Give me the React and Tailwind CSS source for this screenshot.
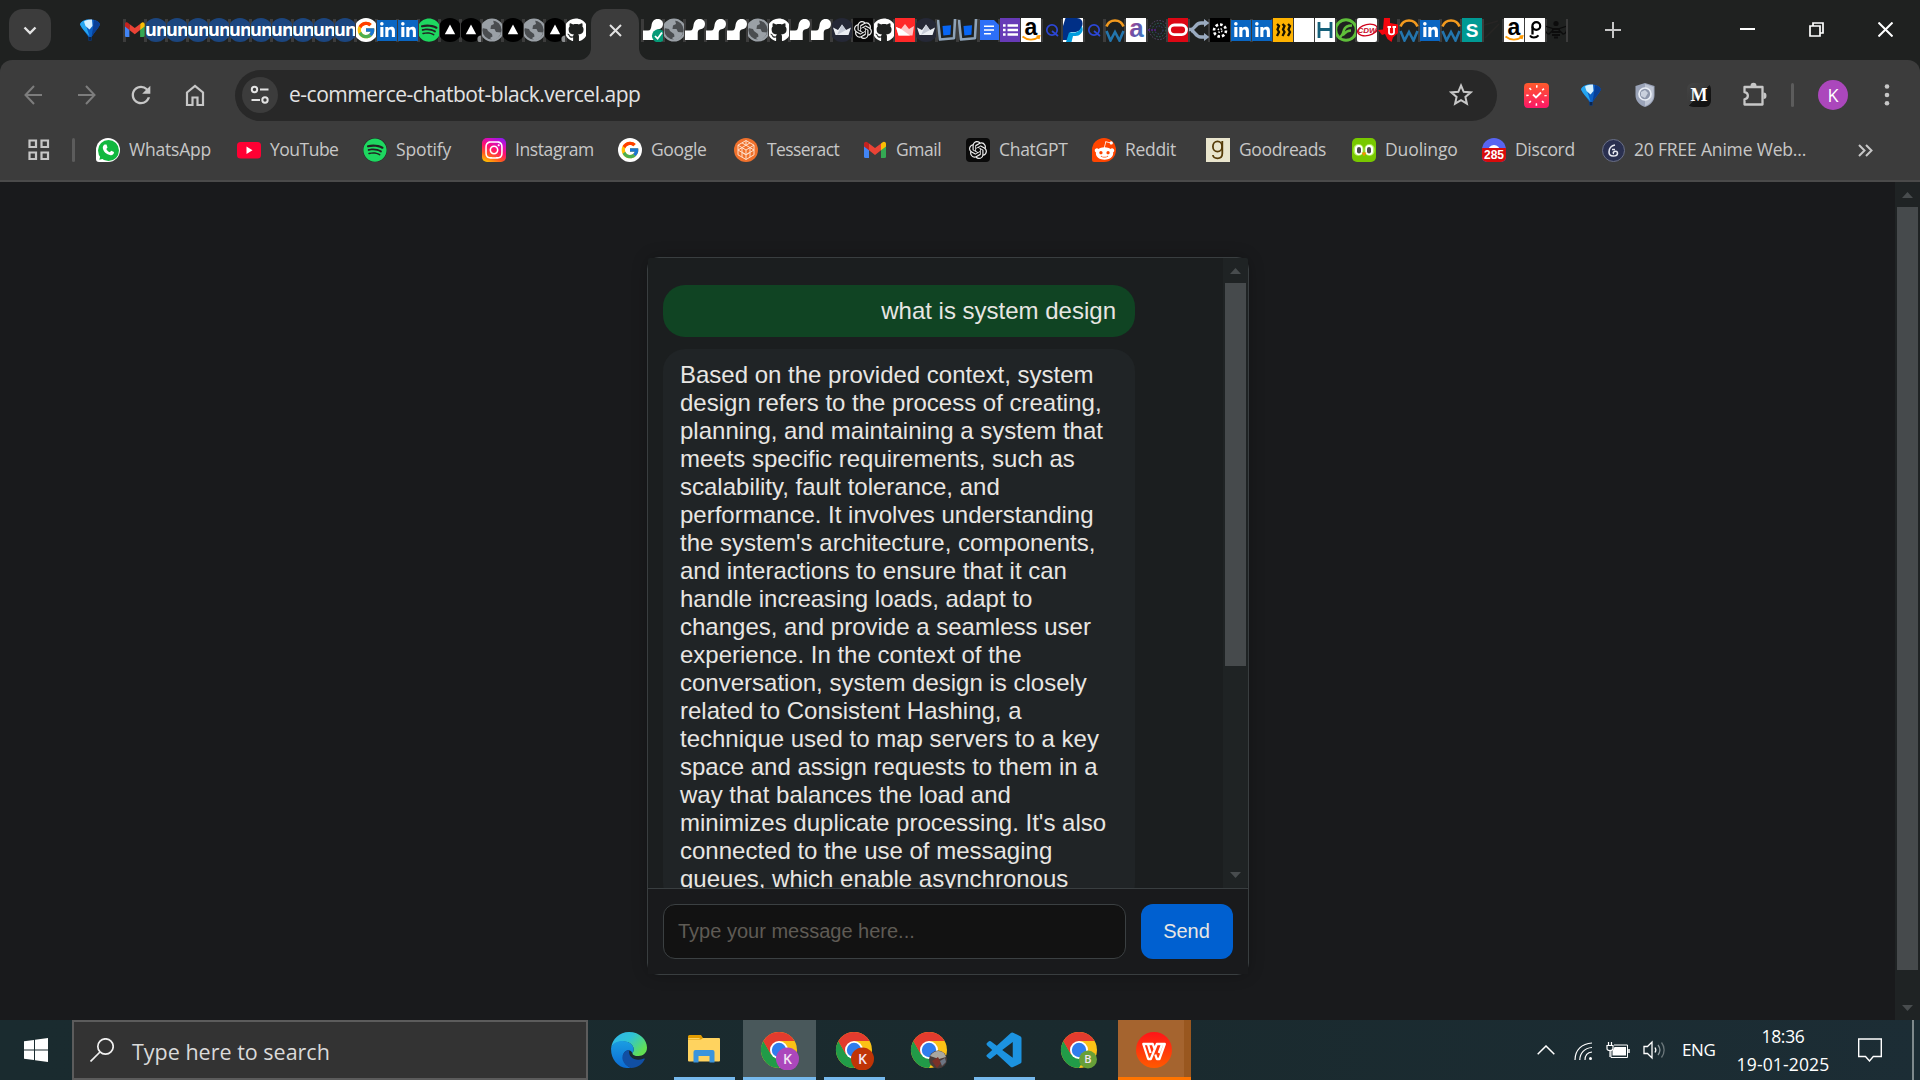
import React from "react";
import { FaGithub, FaWhatsapp, FaSpotify, FaLinkedinIn, FaRedditAlien, FaInstagram } from "react-icons/fa";
import { SiOpenai } from "react-icons/si";
import { FcGoogle } from "react-icons/fc";
import { MdRefresh } from "react-icons/md";
import { BiLogoVisualStudio } from "react-icons/bi";

const UI = "font-['Open_Sans','Noto_Sans',sans-serif]";

function Svg({ size = 24, children, className = "" }) {
  return (
    <svg viewBox="0 0 24 24" width={size} height={size} className={`block shrink-0 overflow-visible ${className}`} fill="none">
      {children}
    </svg>
  );
}

/* ---------- favicons ---------- */
const Gmail = ({ size = 24 }) => (
  <Svg size={size}>
    <path d="M1 5v13.500a1.500 1.500 0 0 0 1.500 1.500H6V9.500L1 5z" fill="#4285f4" />
    <path d="M23 5v13.500a1.500 1.500 0 0 1-1.500 1.500H18V9.500L23 5z" fill="#34a853" />
    <path d="M18 5.500v6.800l5-3.900V6c0-2.300-2.300-2.900-3.700-1.600L18 5.500z" fill="#fbbc04" />
    <path d="M6 12.300V5.500l6 4.500 6-4.500v6.800l-6 4.600-6-4.600z" fill="#ea4335" />
    <path d="M1 6v2.400l5 3.900V5.500L4.700 4.400C3.300 3.100 1 3.700 1 6z" fill="#c5221f" />
  </Svg>
);
const GmailTab = () => <Gmail size={21.5} />;
const Un = () => (
  <span className="flex size-6 shrink-0 items-center justify-center rounded-full bg-[#1c467f]">
    <span className="-mt-[3px] font-['Open_Sans',sans-serif] text-[18px] leading-none font-bold tracking-[-0.8px] text-white">un</span>
  </span>
);
const Google = () => (
  <span className="flex size-6 shrink-0 items-center justify-center rounded-full bg-white">
    <FcGoogle size={20} />
  </span>
);
const LinkedIn = () => (
  <span className="flex h-[21px] w-6 shrink-0 items-center justify-center bg-[#0a66c2]">
    <FaLinkedinIn size={17} className="text-white" />
  </span>
);
const Spotify = () => (
  <span className="relative flex size-6 shrink-0 items-center justify-center rounded-full bg-[#222]">
    <FaSpotify size={24} className="text-[#1ed760]" />
  </span>
);
const Vercel = () => (
  <Svg>
    <circle cx="12" cy="12" r="12" fill="#000" />
    <path d="M12 6.500l5.200 9.700H6.800z" fill="#fff" />
  </Svg>
);
const VercelBusy = () => (
  <Svg>
    <circle cx="12" cy="12" r="12" fill="#000" />
    <path d="M12 6.500l5.200 9.700H6.800z" fill="#fff" />
    <circle cx="22" cy="21" r="3.600" fill="#8a8c8e" />
  </Svg>
);
const Globe = () => (
  <Svg>
    <circle cx="12" cy="12" r="10.600" fill="#4a4d50" stroke="#9aa0a6" strokeWidth="2" />
    <path d="M2 10c.5-4 4-8.500 11-8l1 4-3 1.500-.5 3.500h4l1.500 3 5 .5c-1.500 5-5 7.500-9 7.500L10 20l2.500-1.500L12 16l-4-3-1-2z" fill="#9aa0a6" />
  </Svg>
);
const Github = () => <FaGithub size={24} className="block shrink-0 text-white" />;
const Joint = () => (
  <Svg>
    <path d="M2 12.500h5c2.500 0 3-2 3.500-5C11 3.500 13 1 16.500 1 20 1 22 3 22 6s-2 5-4.500 5.200c-2.500.3-2.800 2-2.800 4.300V22H2z" fill="#fff" />
  </Svg>
);
const JointOk = () => (
  <Svg>
    <path d="M2 12.500h5c2.500 0 3-2 3.500-5C11 3.500 13 1 16.500 1 20 1 22 3 22 6s-2 5-4.500 5.200c-2.500.3-2.800 2-2.800 4.300V22H2z" fill="#fff" />
    <circle cx="17.500" cy="17.800" r="6.600" fill="#069b78" />
    <path d="M14 18l2.600 2.700L21 14.500" stroke="#fff" strokeWidth="1.800" />
  </Svg>
);
const Crown = () => (
  <Svg>
    <circle cx="12" cy="12" r="12" fill="#252836" />
    <path d="M3 9.500l5 2.500 4-5.500 4 5.500 5-2.500-2.500 7.500h-13z" fill="#eceff4" />
    <path d="M12 6.500l4 5.500-9 5z" fill="#c5cad6" />
  </Svg>
);
const CrownRed = () => (
  <Svg>
    <path d="M1 0h22v24H1z" fill="#ff2828" />
    <path d="M3 9l5 2 4-5 4 5 5-3-1.500 9.500H5.500z" fill="#ffc4c4" />
    <path d="M3 9l5 2 9 6.500H5.500z" fill="#fff" />
  </Svg>
);
const Gpt = () => (
  <span className="flex size-6 shrink-0 items-center justify-center rounded-[4px] bg-[#0a0a0a]">
    <SiOpenai size={18} className="text-[#eee]" />
  </span>
);
const Glass = () => (
  <Svg>
    <path d="M3 2l2 19.500 14-1.200L20 1" stroke="#8fa3b8" strokeWidth="2.600" strokeLinejoin="round" />
    <path d="M7.500 8l8.500-.7-.6 9.500-7 .8z" fill="#0866f5" />
  </Svg>
);
const Doc = () => (
  <Svg>
    <path d="M3 2h14l5 5v15H3z" fill="#2d6ff7" />
    <path d="M7 8.300h10M7 12h10M7 15.700h7" stroke="#fff" strokeWidth="1.600" />
  </Svg>
);
const Form = () => (
  <Svg>
    <path d="M2 0h20v24H2z" fill="#673ab7" />
    <path d="M5 7.500h2.600M5 12h2.600M5 16.500h2.600M9.500 7.500H20M9.500 12H20M9.500 16.500H20" stroke="#fff" strokeWidth="2.600" />
  </Svg>
);
const Amazon = () => (
  <Svg>
    <path d="M2 0h20v24H2z" fill="#fff" />
    <text x="12" y="17" textAnchor="middle" fontFamily="Liberation Sans" fontWeight="bold" fontSize="23" fill="#000">a</text>
    <path d="M3.500 18.500c5 4 11.500 4 16.500.5M17.500 18.300l3-.2-.8 2.800" stroke="#f90" strokeWidth="1.800" />
  </Svg>
);
const Quora = () => (
  <Svg>
    <circle cx="12" cy="12" r="5.200" stroke="#2c47d6" strokeWidth="1.700" />
    <path d="M12 13l6 5" stroke="#2c47d6" strokeWidth="1.700" />
  </Svg>
);
const Paypal = () => (
  <Svg>
    <path d="M2 0h20v24H2z" fill="#fff" />
    <path d="M4.500 0H16c5 .5 6.500 4 5 8.500-1.300 4-4 5.500-8 5.500H9.500L7.500 22H2V8z" fill="#002f86" />
    <path d="M20.500 8c3 3.500 0 10-6 10h-2.500L10.500 24H5l3-9.500h5c4 0 6.500-2.500 7.500-6.500z" fill="#009cde" />
  </Svg>
);
const ArcW = () => (
  <Svg>
    <path d="M3.500 8.500c3-8 14-8 17 0" stroke="#f39a1e" strokeWidth="2.600" />
    <path d="M3.500 13l4 9.500L12 14l4.500 8.500 4-9.500" stroke="#2375ad" strokeWidth="2.600" />
  </Svg>
);
const LetterA = () => (
  <Svg>
    <defs>
      <linearGradient id="aGrad" x1="0" y1="0" x2="1" y2="1">
        <stop offset="0" stopColor="#e0457b" />
        <stop offset=".5" stopColor="#6b4fa8" />
        <stop offset="1" stopColor="#2a8fd0" />
      </linearGradient>
    </defs>
    <path d="M2 0h20v24H2z" fill="#fff" />
    <text x="12.500" y="19" textAnchor="middle" fontFamily="Liberation Sans" fontWeight="bold" fontSize="26" fill="url(#aGrad)">a</text>
  </Svg>
);
const Rings = () => (
  <Svg>
    <circle cx="14" cy="12" r="9.500" stroke="#5a4a72" strokeWidth="1" strokeDasharray="1.500 1.500" />
    <circle cx="14" cy="12" r="6.800" stroke="#2f6b62" strokeWidth="1" strokeDasharray="1.500 1.500" />
    <circle cx="14" cy="12" r="4" stroke="#3b4a80" strokeWidth="1" strokeDasharray="1.500 1.500" />
    <path d="M3 12h9" stroke="#4b1f73" strokeWidth="2" strokeDasharray="2 1" />
  </Svg>
);
const Oracle = () => (
  <Svg>
    <path d="M1 0h22v24H1z" fill="#dc0714" />
    <rect x="3.500" y="7" width="17" height="9.600" rx="4.800" stroke="#fff" strokeWidth="2.800" />
  </Svg>
);
const Fork = () => (
  <Svg>
    <path d="M2 11.500h2c4 0 4-6.500 10-6.500h5M4 12.500c4 0 4 6.500 10 6.500h5" stroke="#9aabc0" strokeWidth="3.400" />
    <path d="M17 1l5.500 4L17 9zM17 15l5.500 4-5.500 4z" fill="#9aabc0" />
  </Svg>
);
const Dots = () => (
  <Svg>
    <path d="M2 0h20v24H2z" fill="#000" />
    <circle cx="12" cy="12.500" r="6" stroke="#fff" strokeWidth="2.600" strokeDasharray="2.600 2" />
    <circle cx="12" cy="12.500" r="2" stroke="#fff" strokeWidth="1.400" strokeDasharray="1.500 1.500" />
  </Svg>
);
const Waves = () => (
  <Svg>
    <path d="M2 0h20v24H2z" fill="#ffb300" />
    <path d="M6 6l2 2-1.500 3.500L8 14l-2 4M11.500 6l2 2-1.500 3.500 1.500 2.500-2 4M17 6l2 2-1.500 3.500L19 14l-2 4" stroke="#1a1400" strokeWidth="2.300" />
  </Svg>
);
const Blank = () => <span className="h-6 w-5 shrink-0 bg-white" />;
const LetterH = () => (
  <Svg>
    <path d="M2 0h20v24H2z" fill="#fff" />
    <path d="M6 4v16M18 4v16M6 11.500h12" stroke="#15607a" strokeWidth="2.800" />
  </Svg>
);
const GreenF = () => (
  <Svg>
    <circle cx="12" cy="12" r="10.300" stroke="#5fbf3a" strokeWidth="3" />
    <path d="M4 20c4-1 5-4 6-8 1-3 3-4.500 8-4.500M9 17c1.500-.5 2-4.500 8-4.500" stroke="#5fbf3a" strokeWidth="2.600" />
  </Svg>
);
const Cdw = () => (
  <Svg>
    <rect x="2" width="20" height="24" rx="2" fill="#fff" />
    <ellipse cx="12.500" cy="12" rx="10" ry="5.500" transform="rotate(-12 12.500 12)" stroke="#d0021b" strokeWidth="1.300" />
    <text x="12" y="15" textAnchor="middle" fontFamily="Liberation Sans" fontStyle="italic" fontWeight="bold" fontSize="8" fill="#c8102e">CDW</text>
  </Svg>
);
const Texas = () => (
  <Svg>
    <path d="M8 0h6v5l8 1.500v8.500l-5 4.500-1.500 4.500-4-3-2.500-5-3 1-4-5 5-.5z" fill="#f5060d" />
    <path d="M13 9v5.500c0 2.500 5 2.500 5 0V9M11.500 9H15M16.500 9H20" stroke="#fff" strokeWidth="1.800" />
  </Svg>
);
const LetterS = () => (
  <Svg>
    <path d="M2 0h21v24H2z" fill="#009a94" />
    <text x="12" y="18.500" textAnchor="middle" fontFamily="Liberation Sans" fontWeight="bold" fontSize="19" fill="#fff">S</text>
  </Svg>
);
const Faint = () => (
  <Svg>
    <path d="M3 7l14-4M4 20L18 6" stroke="#272524" strokeWidth="1.500" />
  </Svg>
);
const LetterP = () => (
  <Svg>
    <path d="M2 0h20v24H2z" fill="#fff" />
    <path d="M9.500 16.500V8.500" stroke="#000" strokeWidth="2.300" />
    <circle cx="13.300" cy="8" r="3.900" stroke="#000" strokeWidth="2.200" />
    <path d="M7 17.500c1.500 2.700 6 2.700 8.500-.2" stroke="#000" strokeWidth="2" />
  </Svg>
);
const Bee = () => (
  <Svg>
    <circle cx="12" cy="5.500" r="2.600" fill="#0c0c0c" />
    <path d="M1 8l9 3-5 5c-3 0-4-4-4-8zM23 8l-9 3 5 5c3 0 4-4 4-8z" stroke="#0c0c0c" strokeWidth="1.300" />
    <path d="M8 11h8M7.500 14h9M8 17h8M10 19.500h4" stroke="#0c0c0c" strokeWidth="2" />
  </Svg>
);

const leftTabs = [
  GmailTab, Un, Un, Un, Un, Un, Un, Un, Un, Un, Un, Google, LinkedIn, LinkedIn, Spotify,
  Vercel, VercelBusy, Globe, Vercel, Globe, VercelBusy, Github,
];
const rightTabs = [
  JointOk, Globe, Joint, Joint, Joint, Globe, Github, Joint, Joint, Crown, Gpt, Github, CrownRed, Crown,
  Glass, Glass, Doc, Form, Amazon, Quora, Paypal, Quora, ArcW, LetterA, Rings, Oracle, Fork, Dots,
  LinkedIn, LinkedIn, Waves, Blank, LetterH, GreenF, Cdw, Texas, ArcW, LinkedIn, ArcW, LetterS, Faint,
  Amazon, LetterP, Bee,
];

function TabRow({ icons }) {
  return (
    <div className="flex h-6 items-center">
      {icons.map((Icon, i) => (
        <div key={i} className="flex h-6 w-[21px] shrink-0 items-center">
          <span className="mt-px h-[23px] w-[3px] shrink-0 bg-[#3c3c3c]" />
          <span className="relative -ml-px flex h-6 w-5 shrink-0 items-center justify-center overflow-hidden">
            <Icon />
          </span>
        </div>
      ))}
    </div>
  );
}

const Balloon = () => (
  <svg viewBox="0 0 22 24" width="22" height="24" className="block shrink-0">
    <path d="M1 6.500C2 3 6 1.500 11 1.500s9 1.500 10 5C19.500 10 15.500 14 12.500 19v3.500h-3V19C6.500 14 2.500 10 1 6.500z" fill="#0b5fc4" />
    <path d="M1 6.500C2 3 6 1.500 10 1.500L7 7.500l3.500 11C6.500 14 2.500 10 1 6.500z" fill="#25a5ef" />
    <path d="M5 3.500c2-1.500 5-2 8-2L13.500 8l-3 3.500L6.500 8z" fill="#d4f0ff" />
    <path d="M15 2c3 .7 5.300 2 6 4.500-1.500 3.500-5.500 7.500-8.500 12.500l1.500-9z" fill="#083f96" />
    <path d="M9.500 19h3v3.500h-3z" fill="#0a2550" />
  </svg>
);

function TabStrip() {
  return (
    <div className="flex h-[60px] shrink-0 items-start bg-[#1f2120]">
      <button className="mt-[9px] ml-[9px] flex size-[42px] shrink-0 items-center justify-center rounded-[14px] bg-[#3c3c3c]">
        <svg width="14" height="9" viewBox="0 0 14 9" fill="none"><path d="M1.500 1.500L7 7l5.500-5.500" stroke="#e3e3e3" strokeWidth="2.400" /></svg>
      </button>
      <div className="mt-[18px] ml-[28px] w-[44px] shrink-0"><Balloon /></div>
      <div className="mt-[18px] w-[456px] shrink-0"><TabRow icons={leftTabs} /></div>
      <div className="flex h-[60px] w-[72px] shrink-0 items-end">
        <svg width="12" height="12" viewBox="0 0 12 12" className="block shrink-0"><path d="M0 12A12 12 0 0 0 12 0V12z" fill="#3c3c3c" /></svg>
        <div className="flex h-[51px] w-12 shrink-0 items-start justify-center rounded-t-[14px] bg-[#3c3c3c] pt-[15px]">
          <svg width="13" height="13" viewBox="0 0 13 13"><path d="M1 1l11 11M12 1L1 12" stroke="#e3e3e3" strokeWidth="2" /></svg>
        </div>
        <svg width="12" height="12" viewBox="0 0 12 12" className="block shrink-0"><path d="M12 12A12 12 0 0 1 0 0V12z" fill="#3c3c3c" /></svg>
      </div>
      <div className="mt-[18px] -ml-[10px] w-[925px] shrink-0"><TabRow icons={rightTabs} /></div>
      <span className="mt-[19px] h-[23px] w-[2px] shrink-0 bg-[#3c3c3c]" />
      <svg width="16" height="16" viewBox="0 0 16 16" className="mt-[22px] ml-[37px] shrink-0"><path d="M8 0v16M0 8h16" stroke="#c7c7c7" strokeWidth="2" /></svg>
      <div className="mt-[22px] mr-[27px] ml-auto flex shrink-0 items-center gap-[54px]">
        <svg width="15" height="15" viewBox="0 0 15 15"><path d="M0 7h15" stroke="#fff" strokeWidth="2" /></svg>
        <svg width="15" height="15" viewBox="0 0 15 15" fill="none"><path d="M1 4h10v10H1zM4 4V1h10v10h-3" stroke="#fff" strokeWidth="1.700" /></svg>
        <svg width="15" height="15" viewBox="0 0 15 15"><path d="M.5.5l14 14M14.500.5l-14 14" stroke="#fff" strokeWidth="2" /></svg>
      </div>
    </div>
  );
}

function Toolbar() {
  return (
    <div className="flex h-[70px] shrink-0 items-center rounded-t-[12px] bg-[#3c3c3c]">
      <svg width="18" height="22" viewBox="0 0 18 22" fill="none" className="ml-6"><path d="M18 11H2M10 2l-8.500 9L10 20" stroke="#7d7d7d" strokeWidth="2" /></svg>
      <svg width="18" height="22" viewBox="0 0 18 22" fill="none" className="ml-[36px]"><path d="M0 11h16M8 2l8.500 9L8 20" stroke="#7d7d7d" strokeWidth="2" /></svg>
      <MdRefresh size={28} className="ml-[31px] text-[#c7c7c7]" />
      <svg width="20" height="22" viewBox="0 0 20 22" fill="none" className="ml-[30px]"><path d="M2 8.500L10 2l8 6.500V21h-5.500v-7.500h-5V21H2z" stroke="#c7c7c7" strokeWidth="2.200" /></svg>
      <div className="ml-[30px] flex h-[51px] w-[1262px] shrink-0 items-center rounded-full bg-[#282828] pl-[7px]">
        <span className="flex size-9 shrink-0 items-center justify-center rounded-full bg-[#3c3c3c]">
          <svg width="20" height="20" viewBox="0 0 20 20" fill="none" stroke="#e3e3e3" strokeWidth="2">
            <circle cx="4.500" cy="4.500" r="2.700" /><path d="M10 4.500h8.500M1.500 15H10" /><circle cx="15" cy="15" r="2.700" />
          </svg>
        </span>
        <span className={`${UI} ml-[11px] text-[21px] tracking-[-0.48px] text-[#e3e3e3]`}>e-commerce-chatbot-black.vercel.app</span>
        <svg width="24" height="24" viewBox="0 0 24 24" fill="none" className="mr-6 ml-auto"><path d="M12 2.500l2.700 6.300 6.900.6-5.200 4.500 1.500 6.800-5.900-3.600-5.900 3.600 1.500-6.800-5.200-4.500 6.900-.6z" stroke="#c7c7c7" strokeWidth="2" /></svg>
      </div>
      <svg width="25" height="25" viewBox="0 0 25 25" fill="none" className="ml-[27px]">
        <defs><linearGradient id="clk" x1="0" y1="0" x2="0" y2="1"><stop offset="0" stopColor="#ff5a2b" /><stop offset="1" stopColor="#fb1768" /></linearGradient></defs>
        <rect width="25" height="25" rx="4" fill="url(#clk)" />
        <circle cx="12.500" cy="12.500" r="9" stroke="#fff" strokeWidth="2.400" strokeDasharray="1.600 5.470" strokeDashoffset=".8" />
        <path d="M9 11.500l3 3 5-5" stroke="#fff" strokeWidth="1.800" />
      </svg>
      <div className="ml-[31px]"><Balloon /></div>
      <svg width="20" height="24" viewBox="0 0 20 24" fill="none" className="ml-[33px]">
        <path d="M10 0l9.500 3v9c0 6-4 10-9.500 12C4.500 22 .5 18 .5 12V3z" fill="#9aa3b8" />
        <path d="M10 1l8.500 3v8c0 5.500-3.500 9-8.500 11z" fill="#bcc3d2" />
        <circle cx="10" cy="11" r="6" fill="#8d96ab" stroke="#e9edf5" strokeWidth="1.700" /><path d="M6 9l4-2 3 3-3 5-4-2z" fill="#c9d0dd" />
      </svg>
      <span className="ml-[32px] flex size-6 items-center justify-center rounded-[6px] bg-[linear-gradient(135deg,#444_0%,#3a3a3a_50%,#171717_52%,#111_100%)] font-['Liberation_Serif',serif] text-[18px] leading-none font-bold text-white">M</span>
      <svg width="26" height="26" viewBox="0 0 26 26" fill="none" className="ml-[31px]">
        <path d="M2.500 5h18v17.500h-18v-5.200c4.500-.8 4.500-6.300 0-7.100z" stroke="#c7c7c7" strokeWidth="2.300" strokeLinejoin="round" />
        <path d="M8.500 4a3 3.200 0 0 1 6 0zM21.500 10.500a3 3.200 0 0 1 0 6.400z" fill="#c7c7c7" />
      </svg>
      <span className="ml-[23px] h-6 w-[3px] rounded-full bg-[#5c5c5c]" />
      <span className={`${UI} ml-6 flex size-[30px] items-center justify-center rounded-full bg-[#ab47bc] text-[18px] text-white`}>K</span>
      <svg width="6" height="24" viewBox="0 0 6 24" className="ml-9"><g fill="#c7c7c7"><circle cx="3" cy="3.500" r="2.300" /><circle cx="3" cy="12" r="2.300" /><circle cx="3" cy="20.300" r="2.300" /></g></svg>
    </div>
  );
}

/* ---------- bookmarks ---------- */
const Whatsapp = () => (
  <span className="relative flex size-6 items-center justify-center rounded-[12px_12px_12px_3px] bg-white">
    <span className="flex size-[21px] items-center justify-center rounded-full bg-[#12b83f]">
      <FaWhatsapp size={21} className="text-[#12b83f]" />
    </span>
    <svg viewBox="0 0 24 24" width="24" height="24" className="absolute inset-0"><path d="M8.500 6.500l2 0 1 3-1.200 1.400c.8 1.600 1.900 2.600 3.500 3.300l1.400-1.400 2.800 1.300c0 2.300-1.600 3.300-3.400 3.100-4.200-.6-7.300-3.600-7.800-7.200-.1-1.500.6-2.800 1.700-3.500z" fill="#fff" /></svg>
  </span>
);
const Youtube = () => (
  <Svg><rect y="4" width="24" height="16.500" rx="3.500" fill="#ff0033" /><path d="M9.500 8.500l6 3.700-6 3.700z" fill="#fff" /></Svg>
);
const Insta = () => (
  <span className="flex size-6 items-center justify-center rounded-[5px] bg-[linear-gradient(25deg,#ffc400_5%,#ff5a1f_28%,#ff0f6f_52%,#d40fc0_75%,#7a1cff_100%)]">
    <FaInstagram size={20} className="text-white" />
  </span>
);
const Tesseract = () => (
  <Svg>
    <circle cx="12" cy="12" r="12" fill="#f0712c" />
    <g stroke="#ffe0ca" strokeWidth="1">
      <path d="M12 2.500l8 4.700v9.600l-8 4.700-8-4.700V7.200z" />
      <path d="M4 7.200L12 12l8-4.800M12 12v9.500M12 2.500V7M8 4.900l8 4.700v9.500M16 4.900L8 9.600v9.500M4 12l8 4.700 8-4.700M4 12l4-2.400M20 12l-4-2.400M12 16.700L8 14.400M12 16.700l4-2.300" />
    </g>
  </Svg>
);
const Reddit = () => (
  <span className="flex size-6 items-center justify-center rounded-[12px_12px_12px_2px] bg-[#ff4500]">
    <FaRedditAlien size={21} className="text-white" />
  </span>
);
const Goodreads = () => (
  <Svg>
    <path d="M0 0h24v24H0z" fill="#e9e5cd" />
    <g stroke="#553b08" strokeWidth="1.800">
      <ellipse cx="11.500" cy="8.500" rx="4.600" ry="5.200" />
      <path d="M16.300 3v12.500c0 3.500-2 4.800-4.800 4.800-2.500 0-4.300-1-4.600-3.300" />
    </g>
  </Svg>
);
const Duo = () => (
  <Svg>
    <rect width="24" height="24" rx="5" fill="#78c800" />
    <rect x="1.500" y="6" width="10" height="12" rx="5" fill="#b5ef60" /><rect x="12.500" y="6" width="10" height="12" rx="5" fill="#b5ef60" />
    <rect x="3" y="7" width="7.500" height="10" rx="3.700" fill="#fff" /><rect x="13.500" y="7" width="7.500" height="10" rx="3.700" fill="#fff" />
    <rect x="5" y="9" width="4" height="6.500" rx="2" fill="#4b4b4b" /><rect x="15" y="9" width="4" height="6.500" rx="2" fill="#4b4b4b" />
    <path d="M9.500 14.500h5L12 18.500z" fill="#f49000" />
  </Svg>
);
const Discord = () => (
  <span className="relative block size-6 overflow-hidden rounded-[12px_12px_5px_5px] bg-[#5865f2]">
    <span className="absolute top-[7px] left-[6px] h-3 w-3 rounded-full bg-white" />
    <span className="absolute inset-x-0 bottom-0 flex h-[14px] items-center justify-center bg-[#d80b0b] font-['Liberation_Sans',sans-serif] text-[12px] leading-none font-bold text-white">285</span>
  </span>
);
const Anime = () => (
  <span className="flex size-[23px] items-center justify-center rounded-full border-[1.5px] border-[#6a7086] bg-[#2a3050]">
    <svg width="12" height="13" viewBox="0 0 12 13" fill="none" stroke="#e6e8f0" strokeWidth="1.600"><path d="M8 1C4.500 1.500 2 4.500 2 8s2 4 4.200 4 4.300-1 4.300-2.800S9 7 7.500 7.500 6 9.500 7 9.500M5 5.500h3" /></svg>
  </span>
);

const bookmarks = [
  { icon: Whatsapp, label: "WhatsApp", w: "w-[141px]", t: "tracking-[-0.2px]" },
  { icon: Youtube, label: "YouTube", w: "w-[126px]", t: "tracking-[-0.5px]" },
  { icon: Spotify, label: "Spotify", w: "w-[119px]", t: "tracking-[-0.15px]" },
  { icon: Insta, label: "Instagram", w: "w-[136px]", t: "tracking-[-0.4px]" },
  { icon: Google, label: "Google", w: "w-[116px]", t: "tracking-[-0.35px]" },
  { icon: Tesseract, label: "Tesseract", w: "w-[129px]", t: "tracking-[-0.6px]" },
  { icon: Gmail, label: "Gmail", w: "w-[103px]", t: "tracking-[-0.45px]" },
  { icon: Gpt, label: "ChatGPT", w: "w-[126px]", t: "tracking-[-0.3px]" },
  { icon: Reddit, label: "Reddit", w: "w-[114px]", t: "tracking-[-0.3px]" },
  { icon: Goodreads, label: "Goodreads", w: "w-[146px]", t: "tracking-[-0.35px]" },
  { icon: Duo, label: "Duolingo", w: "w-[130px]", t: "tracking-[-0.1px]" },
  { icon: Discord, label: "Discord", w: "w-[119px]", t: "tracking-[-0.35px]" },
  { icon: Anime, label: "20 FREE Anime Web...", w: "w-[258px]", t: "tracking-[-0.18px]" },
];

function BookmarkBar() {
  return (
    <div className="flex h-[52px] shrink-0 items-start border-b-2 border-[#4a4a4a] bg-[#3c3c3c] pt-2">
      <svg width="22" height="22" viewBox="0 0 22 22" fill="none" className="mt-px ml-[28px] shrink-0" stroke="#c7c7c7" strokeWidth="2.200">
        <path d="M1.500 1.500h6.500v6.500H1.500zM13.500 1.500H20v6.500h-6.500zM1.500 13.500H8V20H1.500zM13.500 13.500H20V20h-6.500z" />
      </svg>
      <span className="ml-[22px] h-6 w-[3px] shrink-0 rounded-full bg-[#5c5c5c]" />
      <div className="ml-[21px] flex h-6 items-center">
        {bookmarks.map(({ icon: Icon, label, w, t }) => (
          <div key={label} className={`flex shrink-0 items-center gap-[9px] ${w}`}>
            <span className="flex size-6 shrink-0 items-center justify-center"><Icon /></span>
            <span className={`${UI} -mt-[2px] text-[17.500px] leading-6 whitespace-nowrap text-[#c7c7c7] ${t}`}>{label}</span>
          </div>
        ))}
      </div>
      <svg width="15" height="13" viewBox="0 0 15 13" fill="none" className="mt-[6px] -ml-px shrink-0"><path d="M1 1l5.500 5.500L1 12M8 1l5.500 5.500L8 12" stroke="#c7c7c7" strokeWidth="2" /></svg>
    </div>
  );
}

/* ---------- page ---------- */
const Arrow = ({ down }) => (
  <svg width="11" height="6" viewBox="0 0 11 6" className={`block shrink-0 ${down ? "rotate-180" : ""}`}><path d="M5.500 0L11 6H0z" fill="#484c4e" /></svg>
);

function ChatPanel() {
  return (
    <div className="flex h-[718px] w-[602px] flex-col rounded-[12px] border border-[#393e40] shadow-[0_0_15px_rgba(0,0,0,0.25)]">
      <div className="flex h-[630px] shrink-0 overflow-hidden rounded-[2px] bg-[#1b1e1f]">
        <div className="flex h-full w-[575px] shrink-0 flex-col gap-3 overflow-hidden pt-[27px] pl-[15px] font-['Liberation_Sans',Arial,sans-serif] text-[24px] leading-7 text-[#e8e6e3]">
          <div className="w-[472px] shrink-0 rounded-[22px] bg-[#104423] py-3 pr-[19px] pl-[18px] text-right">what is system design</div>
          <div className="w-[472px] shrink-0 rounded-[22px] bg-[#202426] py-3 pr-[18px] pl-[17px]">
            Based on the provided context, system design refers to the process of creating, planning, and maintaining a system that meets specific requirements, such as scalability, fault tolerance, and performance. It involves understanding the system's architecture, components, and interactions to ensure that it can handle increasing loads, adapt to changes, and provide a seamless user experience. In the context of the conversation, system design is closely related to Consistent Hashing, a technique used to map servers to a key space and assign requests to them in a way that balances the load and minimizes duplicate processing. It's also connected to the use of messaging queues, which enable asynchronous
          </div>
        </div>
        <div className="flex w-[25px] shrink-0 flex-col items-center bg-[#1f2324] pt-[10px] pb-[10px]">
          <Arrow />
          <div className="mt-[9px] h-[383px] w-[21px] bg-[#464a4c]" />
          <div className="mt-auto"><Arrow down /></div>
        </div>
      </div>
      <div className="flex flex-1 gap-[15px] border-t border-[#393e40] bg-[#191a1c] px-[15px] pt-[15px] font-['Liberation_Sans',Arial,sans-serif] text-[20px]">
        <div className="flex h-[55px] w-[463px] items-center rounded-[12px] border border-[#3b4042] bg-[#121212] pb-[2px] pl-[14px] text-[#5f5b55]">Type your message here...</div>
        <button className="h-[55px] w-[92px] rounded-[12px] bg-[#0060d0] pr-px pb-[2px] text-[#e8e6e3]">Send</button>
      </div>
    </div>
  );
}

function Page() {
  return (
    <div className="flex h-[838px] shrink-0 bg-[#191a1c]">
      <div className="w-[1895px] shrink-0 pt-[75px] pl-[647px]"><ChatPanel /></div>
      <div className="flex w-[25px] shrink-0 flex-col items-center bg-[#1f2324] pt-[10px] pb-[9px]">
        <Arrow />
        <div className="mt-[9px] h-[763px] w-[21px] bg-[#464a4c]" />
        <div className="mt-auto"><Arrow down /></div>
      </div>
    </div>
  );
}

/* ---------- taskbar ---------- */
const Chrome = ({ badge }) => (
  <svg width="40" height="40" viewBox="0 0 40 40" className="block shrink-0">
    <circle cx="20" cy="20" r="18" fill="#fbc116" />
    <path d="M4.400 11A18 18 0 0 0 20 38l7.800-13.500L20 20l-7.800 4.500z" fill="#219b48" />
    <path d="M20 11h15.600A18 18 0 0 0 20 2a18 18 0 0 0-15.600 9l7.800 13.500z" fill="#e33b2e" />
    <path d="M4.400 11l7.800 13.500L14 15z" fill="#e33b2e" />
    <circle cx="20" cy="20" r="9" fill="#fff" />
    <circle cx="20" cy="20" r="7.200" fill="#2f7ded" />
    {badge}
  </svg>
);
const Badge = ({ c, l, r = 11.5, x = 28.5, y = 29, s = 14 }) => (
  <g>
    <circle cx={x} cy={y} r={r} fill={c} />
    <text x={x} y={y + s * 0.36} textAnchor="middle" fontFamily="Open Sans" fontWeight="600" fontSize={s} fill="#f3e3f2">{l}</text>
  </g>
);
const Edge = () => (
  <svg width="36" height="36" viewBox="0 0 36 36" className="block">
    <defs>
      <linearGradient id="e1" x1="0" y1="0" x2="1" y2=".6"><stop offset="0" stopColor="#2fb4ee" /><stop offset=".5" stopColor="#2fc3d6" /><stop offset="1" stopColor="#62e052" /></linearGradient>
      <linearGradient id="e2" x1="0" y1="0" x2="0" y2="1"><stop offset="0" stopColor="#1b9de2" /><stop offset="1" stopColor="#0b6bd3" /></linearGradient>
    </defs>
    <path d="M.2 16C1 7 8.500 0 18 0c11 0 18 8 18 15.500 0 5.500-4 8.500-8.500 8.500-4 0-6-1.300-6-2.600 0-1 1.200-1.500 1.200-4C22.700 13 18 9.500 12.500 9.500 6 9.500 1 12.500.2 16z" fill="url(#e1)" />
    <path d="M.1 16C1 11.500 6 9 11.500 9c6.500 0 11.200 4 11.200 8.500 0 2-1.200 3-1.200 4-1-3-4-4-6.500-2.500C10 22 11 32 20 35.900 8 37.500-.5 28 .1 16z" fill="url(#e2)" />
    <path d="M14 19.500C9 24 11 33 20 35.900c6 .1 11.500-3.400 13.700-8.700.3-.7-.3-1-.9-.7-8 3.500-16-1-14.600-8.300-1.500-.1-3 .3-4.200 1.300z" fill="#114fa3" />
  </svg>
);
const Folder = () => (
  <svg width="32" height="28" viewBox="0 0 32 28" className="block">
    <path d="M0 1.500A1.500 1.500 0 0 1 1.500 0H13l2 3-2 2H0z" fill="#e29c00" />
    <rect y="3" width="32" height="23.500" rx="1" fill="#ffd35f" />
    <path d="M0 4.500h13l2-1.500h-2.500L11 4H0z" fill="#e29c00" />
    <path d="M5.500 27.500V17a2 2 0 0 1 2-2h17a2 2 0 0 1 2 2v10.500h-5V21h-11v6.500z" fill="#3b94dc" />
  </svg>
);
const Wps = () => (
  <svg width="36" height="36" viewBox="0 0 36 36" className="block" fill="none">
    <defs><linearGradient id="wp" x1="0" y1="0" x2="0" y2="1"><stop offset="0" stopColor="#ff1418" /><stop offset="1" stopColor="#ff5a00" /></linearGradient></defs>
    <circle cx="18" cy="18" r="18" fill="url(#wp)" />
    <path d="M18.500 17l-1.700-5H7.300l4.900 15h2.600l6-15h8l-5.400 15h-2.600l-1.500-4.500M12 12.500l2.600 8.500M26 12.500L22.800 21" stroke="#fff" strokeWidth="2.300" strokeLinejoin="round" />
  </svg>
);

function TaskItem({ w, line = "w-[61px] bg-[#76b9ed]", bg = "", children }) {
  return (
    <div className={`flex h-[60px] shrink-0 flex-col items-center ${w} ${bg}`}>
      <div className="flex h-[57px] items-center justify-center pr-[2px]">{children}</div>
      <div className={`h-[3px] ${line}`} />
    </div>
  );
}

function Taskbar() {
  return (
    <div className="flex h-[60px] shrink-0 bg-[linear-gradient(90deg,#1a2b2f_0%,#1a2a2e_60%,#1c2d35_100%)]">
      <div className="flex w-[72px] shrink-0 items-center justify-center">
        <svg width="24" height="24" viewBox="0 0 24 24" fill="#fff"><path d="M0 3.300l10-1.400v9.600H0zM11 1.800L24 0v11.500H11zM0 12.500h10v9.600L0 20.700zM11 12.500h13V24l-13-1.800z" /></svg>
      </div>
      <div className="flex w-[516px] shrink-0 items-center border-2 border-[#5c5c5c] bg-[#333]">
        <svg width="24" height="24" viewBox="0 0 24 24" fill="none" className="ml-4 shrink-0" stroke="#f0f0f0" strokeWidth="1.700"><circle cx="15.500" cy="8.500" r="7.700" /><path d="M10 14L.5 23.500" /></svg>
        <span className={`${UI} ml-[18px] pt-1 text-[21.500px] tracking-[0px] whitespace-nowrap text-[#dadada]`}>Type here to search</span>
      </div>
      <div className="ml-[5px] flex shrink-0">
        <TaskItem w="w-[73px]" line="w-0"><div className="mt-[3px]"><Edge /></div></TaskItem>
        <TaskItem w="w-[77px]"><Folder /></TaskItem>
        <TaskItem w="w-[73px]" bg="bg-[#49585b]" line="w-full bg-[#76b9ed]"><div className="mt-[3px]"><Chrome badge={<Badge c="#ab47bc" l="K" />} /></div></TaskItem>
        <TaskItem w="w-[77px]"><div className="mt-[3px]"><Chrome badge={<Badge c="#c03406" l="K" />} /></div></TaskItem>
        <TaskItem w="w-[73px]" line="w-0">
          <div className="mt-[3px]"><Chrome badge={<g><circle cx="29" cy="29.500" r="9" fill="#4a3c3a" /><path d="M21 26c4-6 10-6 14-3l2 4-7 2z" fill="#a9a7a0" /><path d="M23 31l6-4 3 6-4 5z" fill="#7a3128" /><path d="M31 31l5-3 1 4-4 4z" fill="#6d7684" /></g>} /></div>
        </TaskItem>
        <TaskItem w="w-[77px]"><BiLogoVisualStudio size={42} className="mt-[3px] text-[#1c93e0]" /></TaskItem>
        <TaskItem w="w-[73px]" line="w-0"><div className="mt-[3px]"><Chrome badge={<Badge c="#689f38" l="B" r={9} x={29} y={29.5} s={11} />} /></div></TaskItem>
        <TaskItem w="ml-[2px] w-[73px]" bg="bg-[linear-gradient(90deg,#a5642f_0,#a5642f_66px,#99571f_66px)]" line="w-full bg-[#ff7400]"><div className="mt-[3px]"><Wps /></div></TaskItem>
      </div>
      <div className={`${UI} ml-auto flex shrink-0 items-center text-[#fff]`}>
        <svg width="18" height="10" viewBox="0 0 18 10" fill="none" className="-mt-px"><path d="M.7 9.300L9 1l8.300 8.300" stroke="#fff" strokeWidth="1.500" /></svg>
        <svg width="19" height="19" viewBox="0 0 19 19" fill="none" className="mt-[2px] ml-[19px]" stroke="#fff">
          <path d="M18 1C8 1.500 1 8 1 18" strokeWidth="1.200" /><path d="M18 5.500C10.500 6 5.800 11 5.800 18" strokeWidth="1.200" /><path d="M18 10c-4.500.5-7 3.500-7 8" strokeWidth="1.200" /><circle cx="16.500" cy="16.500" r="1.500" fill="#fff" stroke="none" />
        </svg>
        <svg width="24" height="17" viewBox="0 0 24 17" fill="none" className="ml-[13px]">
          <path d="M8 3h13.500v12.500H5V9" stroke="#fff" strokeWidth="1" /><path d="M8.500 5H20v8.500H6.500V9z" fill="#fff" /><path d="M23 7v4" stroke="#fff" strokeWidth="1.500" />
          <path d="M1 3.500h6v3c0 1.500-1 2-3 2s-3-.5-3-2zM2.500 0v3M5.500 0v3M4 8.500V15" stroke="#fff" strokeWidth="1.200" />
        </svg>
        <svg width="23" height="20" viewBox="0 0 23 20" fill="none" className="ml-[13px]">
          <path d="M1 6.500h3.500L9 2v16l-4.500-4.500H1z" stroke="#fff" strokeWidth="1.300" /><path d="M12 7.500c1 1.500 1 3.500 0 5" stroke="#fff" strokeWidth="1.300" />
          <path d="M15 5c2.300 3 2.300 7 0 10" stroke="#8c979b" strokeWidth="1.300" /><path d="M18.500 2.500c3.500 4.500 3.500 10.500 0 15" stroke="#6b777b" strokeWidth="1.300" />
        </svg>
        <span className="ml-[16px] w-[55px] text-[17px] tracking-[-0.4px]">ENG</span>
        <div className="flex w-[92px] flex-col items-center text-[17.500px] leading-[28.500px] tracking-[0.15px] whitespace-nowrap"><span className="tracking-[-0.3px]">18:36</span><span>19-01-2025</span></div>
        <svg width="24" height="24" viewBox="0 0 24 24" fill="none" className="ml-[29px]"><path d="M.7 1h22.600v17.500h-8L11.500 23l-4-4.500H.7z" stroke="#fff" strokeWidth="1.400" /></svg>
        <span className="mr-[6px] ml-[30px] h-[60px] w-[2px] bg-[#7e898d]" />
      </div>
    </div>
  );
}

export default function App() {
  return (
    <div className="flex h-[1080px] w-[1920px] flex-col overflow-hidden bg-[#1f2120]">
      <TabStrip />
      <Toolbar />
      <BookmarkBar />
      <Page />
      <Taskbar />
    </div>
  );
}
